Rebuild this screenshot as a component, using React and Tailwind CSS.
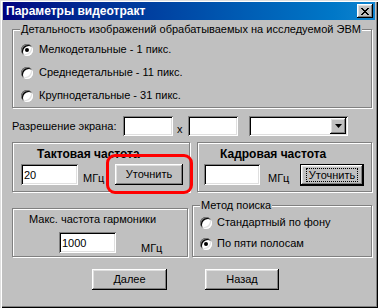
import React from "react";

const raised =
  "bg-[#c0c0c0] shadow-[inset_-1px_-1px_0_#000,inset_1px_1px_0_#fff,inset_-2px_-2px_0_#808080,inset_2px_2px_0_#dfdfdf]";
const sunken =
  "bg-white shadow-[inset_1px_1px_0_#808080,inset_-1px_-1px_0_#fff,inset_2px_2px_0_#000,inset_-2px_-2px_0_#dfdfdf]";
const etched =
  "border border-[#808080] shadow-[inset_1px_1px_0_#fff,1px_1px_0_#fff]";

const Radio = ({ checked }) => (
  <span className="relative w-[12px] h-[12px] shrink-0 rounded-full bg-white shadow-[inset_1px_1px_0_#808080,inset_-1px_-1px_0_#fff,inset_2px_2px_0_#000,inset_-2px_-2px_0_#dfdfdf]">
    {checked && (
      <span className="absolute left-[4px] top-[4px] w-[4px] h-[4px] rounded-full bg-black" />
    )}
  </span>
);

const Edit = ({ className, value }) => (
  <div className={`${sunken} ${className} flex items-center pl-[3px] pt-[1px] leading-[13px]`}>
    {value}
  </div>
);

const Button = ({ className, children }) => (
  <div className={`${raised} ${className} flex items-center justify-center leading-[13px]`}>
    {children}
  </div>
);

export default function App() {
  return (
    <div
      className="relative w-[378px] h-[308px] overflow-hidden bg-[#c0c0c0] text-black text-[11px] leading-[13px] shadow-[inset_1px_1px_0_#dfdfdf,inset_2px_2px_0_#fff,inset_-1px_-1px_0_#000,inset_-2px_-2px_0_#808080]"
      style={{ fontFamily: '"Liberation Sans", Arial, sans-serif' }}
    >
      {/* title bar */}
      <div className="mx-[3px] mt-[2px] h-[18px] flex items-center justify-between bg-gradient-to-r from-[#000080] to-[#1084d0]">
        <span className="pl-[3px] text-white font-bold text-[12px]">Параметры видеотракт</span>
        <div className={`${raised} w-[16px] h-[14px] mr-[2px] flex items-center justify-center`}>
          <svg width="8" height="7" viewBox="0 0 8 7">
            <path d="M0 0 L7 7 M1 0 L8 7 M7 0 L0 7 M8 0 L1 7" stroke="#000" strokeWidth="1" />
          </svg>
        </div>
      </div>

      <div className="flex flex-col pl-[12px] w-[372px]">
        {/* detail group */}
        <div className={`${etched} relative mt-[9px] w-[360px] h-[79px]`}>
          <span className="absolute left-[7px] top-[-7px] px-[1px] bg-[#c0c0c0]">
            Детальность изображений обрабатываемых на исследуемой ЭВМ
          </span>
          <div className="flex flex-col pt-[8px] pl-[8px]">
            {[
              ["Мелкодетальные - 1 пикс.", true],
              ["Среднедетальные - 11 пикс.", false],
              ["Крупнодетальные - 31 пикс.", false],
            ].map(([label, on]) => (
              <div key={label} className="flex items-center gap-[6px] h-[23px]">
                <Radio checked={on} />
                <span>{label}</span>
              </div>
            ))}
          </div>
        </div>

        {/* resolution row */}
        <div className="flex items-center mt-[8px] h-[20px]">
          <span className="w-[111px]">Разрешение экрана:</span>
          <Edit className="w-[50px] h-[20px]" />
          <span className="w-[15px] pl-[4px] pt-[6px]">x</span>
          <Edit className="w-[50px] h-[20px]" />
          <div className={`${sunken} ml-[11px] w-[99px] h-[20px] flex items-center justify-end pr-[2px]`}>
            <div className={`${raised} w-[16px] h-[16px] flex items-center justify-center`}>
              <svg width="7" height="4" viewBox="0 0 7 4">
                <path d="M0 0 H7 L3.5 4 Z" fill="#000" />
              </svg>
            </div>
          </div>
        </div>

        {/* frequency groups */}
        <div className="flex gap-[7px] mt-[6px]">
          <div className={`${etched} w-[178px] h-[50px] flex flex-col`}>
            <span className="mt-[5px] pl-[24px] font-bold text-[12px] leading-[13px]">Тактовая частота</span>
            <div className="flex mt-[3px] pl-[8px]">
              <Edit className="w-[57px] h-[21px]" value="20" />
              <span className="ml-[5px] w-[32px] mt-[8px]">МГц</span>
              <Button className="w-[68px] h-[21px]">Уточнить</Button>
            </div>
          </div>
          <div className={`${etched} w-[175px] h-[50px] flex flex-col`}>
            <span className="mt-[5px] pl-[22px] font-bold text-[12px] leading-[13px]">Кадровая частота</span>
            <div className="flex mt-[3px] pl-[6px]">
              <Edit className="w-[56px] h-[21px]" />
              <span className="ml-[8px] w-[32px] mt-[8px]">МГц</span>
              <div className="w-[64px] h-[22px] border border-black">
                <div className={`${raised} w-full h-full flex items-center justify-center`}>
                  <span className="outline outline-1 outline-dotted outline-black px-[2px] leading-[12px]">
                    Уточнить
                  </span>
                </div>
              </div>
            </div>
          </div>
        </div>

        {/* harmonic + method */}
        <div className="flex gap-[4px] mt-[13px]">
          <div className={`${etched} mt-[3px] w-[176px] h-[49px] flex flex-col`}>
            <span className="mt-[4px] pl-[16px]">Макс. частота гармоники</span>
            <div className="flex mt-[6px] pl-[46px]">
              <Edit className="w-[57px] h-[21px]" value="1000" />
              <span className="ml-[25px] mt-[10px]">МГц</span>
            </div>
          </div>
          <div className={`${etched} relative w-[180px] h-[52px]`}>
            <span className="absolute left-[7px] top-[-7px] px-[1px] bg-[#c0c0c0]">Метод поиска</span>
            <div className="flex flex-col pt-[6px] pl-[7px]">
              {[
                ["Стандартный по фону", false],
                ["По пяти полосам", true],
              ].map(([label, on]) => (
                <div key={label} className="flex items-center gap-[5px] h-[21px]">
                  <Radio checked={on} />
                  <span>{label}</span>
                </div>
              ))}
            </div>
          </div>
        </div>

        {/* buttons */}
        <div className="flex mt-[12px] pl-[80px] gap-[38px]">
          <Button className="w-[75px] h-[21px]">Далее</Button>
          <Button className="w-[74px] h-[21px]">Назад</Button>
        </div>
      </div>

      {/* highlight */}
      <div className="absolute left-[106px] top-[154px] w-[87px] h-[40px] border-[3px] border-[#ff0000] rounded-[9px]" />
    </div>
  );
}
